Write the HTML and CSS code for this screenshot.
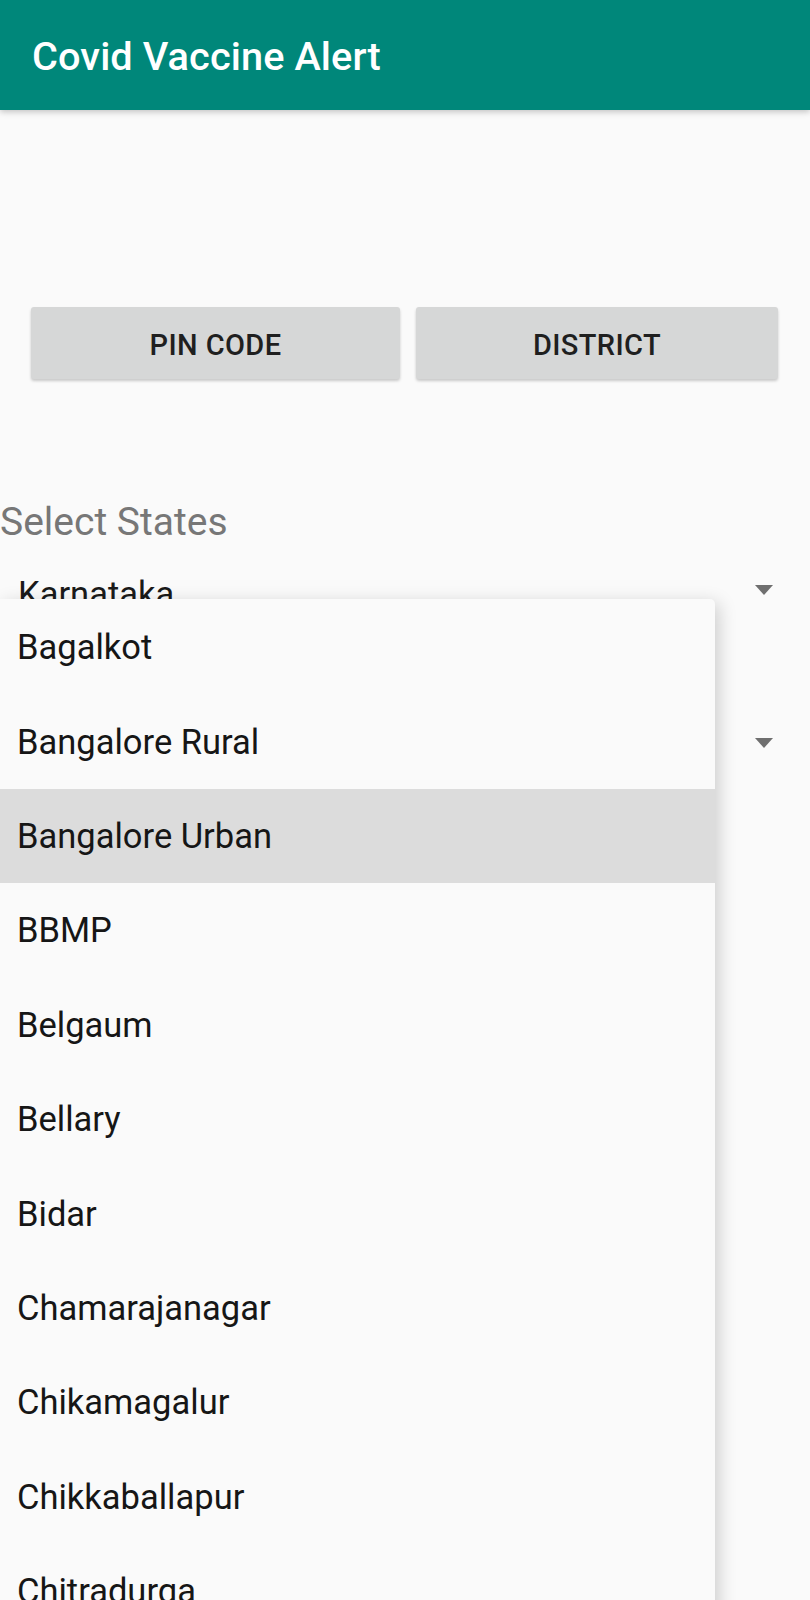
FILE: index.html
```html
<!DOCTYPE html>
<html>
<head>
<meta charset="utf-8">
<link rel="stylesheet" href="styles.css">
</head>
<body>
<header class="appbar"><h1 class="title">Covid Vaccine Alert</h1></header>
<main class="content">
  <div class="buttons">
    <button class="btn">PIN CODE</button>
    <button class="btn">DISTRICT</button>
  </div>
  <div class="label">Select States</div>
  <div class="spinner-area">
    <div class="spinner"><span class="spinner-text">Karnataka</span><span class="arrow"></span></div>
    <div class="spinner second"><span class="spinner-text"></span><span class="arrow"></span></div>
    <ul class="popup">
      <li class="item">Bagalkot</li>
      <li class="item">Bangalore Rural</li>
      <li class="item selected">Bangalore Urban</li>
      <li class="item">BBMP</li>
      <li class="item">Belgaum</li>
      <li class="item">Bellary</li>
      <li class="item">Bidar</li>
      <li class="item">Chamarajanagar</li>
      <li class="item">Chikamagalur</li>
      <li class="item">Chikkaballapur</li>
      <li class="item">Chitradurga</li>
    </ul>
  </div>
</main>
</body>
</html>
```
FILE: styles.css
```css
html, body {
  margin: 0;
  padding: 0;
  background: #fafafa;
  font-family: Roboto, "Noto Sans", sans-serif;
  height: 1600px;
  overflow: hidden;
}
.appbar {
  height: 110px;
  background: #00877a;
  box-shadow: 0 2px 6px rgba(0,0,0,0.22);
  display: flex;
  align-items: center;
  padding-left: 32px;
  position: relative;
  z-index: 2;
}
.title {
  margin: 0;
  color: #fff;
  font-size: 39.7px;
  font-weight: 500;
  letter-spacing: 0.1px;
  padding-top: 3px;
}
.content {
  position: relative;
}
.buttons {
  display: flex;
  gap: 16px;
  padding: 197px 32px 0 31px;
}
.btn {
  height: 72px;
  border: none;
  border-radius: 3px;
  background: #d6d7d7;
  box-shadow: 0 2px 3px rgba(0,0,0,0.2);
  font-family: Roboto, sans-serif;
  font-weight: 500;
  font-size: 29px;
  color: #1f1f1f;
  letter-spacing: 0.4px;
  padding: 4px 0 0;
}
.btn:first-child { width: 369px; }
.btn:last-child { width: 362px; }
.label {
  margin-top: 123px;
  font-size: 39px;
  color: #777;
  line-height: 40px;
  padding-left: 0;
}
.spinner-area {
  position: relative;
}
.spinner {
  height: 94px;
  display: flex;
  align-items: center;
  justify-content: space-between;
  padding: 0 37px 0 18px;
}
.spinner:first-child {
  height: 72px;
  align-items: flex-end;
}
.spinner-text {
  font-size: 34.5px;
  color: #1a1a1a;
}
.spinner:first-child .arrow { margin-bottom: 19px; }
.spinner.second { height: 257px; }
.arrow {
  width: 0;
  height: 0;
  border-left: 9px solid transparent;
  border-right: 9px solid transparent;
  border-top: 10px solid #6f6f6f;
}
.popup {
  position: absolute;
  top: 57px;
  left: 0;
  width: 715px;
  margin: 0;
  padding: 1px 0 0;
  list-style: none;
  background: #fafafa;
  border-radius: 0 5px 0 0;
  box-shadow: 4px 4px 18px rgba(0,0,0,0.18);
  height: 1100px;
  z-index: 3;
}
.item {
  height: 94.4px;
  display: flex;
  align-items: center;
  padding-left: 17px;
  font-size: 34.5px;
  color: #161616;
}
.item.selected {
  background: #dcdcdc;
}
```
